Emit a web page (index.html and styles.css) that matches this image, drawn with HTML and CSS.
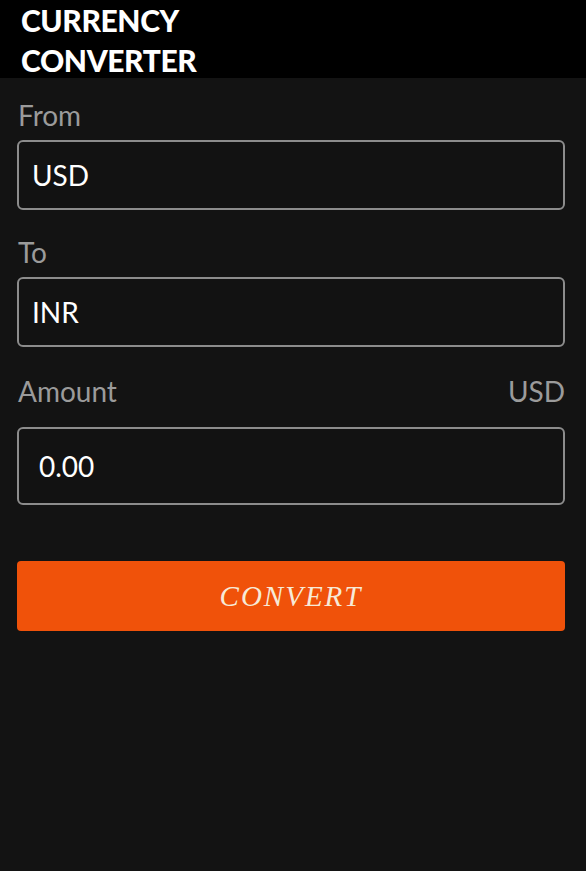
FILE: index.html
```html
<!DOCTYPE html>
<html>
<head>
<meta charset="utf-8">
<link rel="stylesheet" href="styles.css">
</head>
<body>
<header class="topbar">
  <h1 class="title">CURRENCY<br>CONVERTER</h1>
</header>
<main class="form">
  <div class="field">
    <label class="label">From</label>
    <div class="box">USD</div>
  </div>
  <div class="field">
    <label class="label">To</label>
    <div class="box">INR</div>
  </div>
  <div class="field">
    <div class="label-row">
      <label class="label">Amount</label>
      <span class="label">USD</span>
    </div>
    <div class="box box-amount">0.00</div>
  </div>
  <button class="convert">CONVERT</button>
</main>
</body>
</html>
```

FILE: styles.css
```css
html, body {
  margin: 0;
  padding: 0;
  background: #131313;
  height: 100%;
}
body {
  font-family: Lato, "Open Sans", sans-serif;
}
.topbar {
  background: #000;
  height: 78px;
  padding: 0 0 0 21px;
  box-sizing: border-box;
}
.title {
  margin: 0;
  color: #fff;
  font-family: Lato, sans-serif;
  font-weight: 900;
  font-size: 30px;
  line-height: 40px;
  letter-spacing: -0.4px;
}
.form {
  padding: 0 21px 0 17px;
  display: flex;
  flex-direction: column;
}
.field {
  display: flex;
  flex-direction: column;
}
.label {
  color: #9b9b9b;
  font-size: 28px;
  line-height: 30px;
  padding-left: 1px;
}
.field .label { display: block; }
.field:first-child > .label { margin-top: 22px; }
.field:nth-child(2) > .label { margin-top: 27px; }
.label-row {
  display: flex;
  justify-content: space-between;
  margin-top: 29px;
}
.box {
  margin-top: 10px;
  height: 70px;
  box-sizing: border-box;
  border: 2px solid #8c8c8c;
  border-radius: 6px;
  background: #121212;
  color: #fff;
  font-size: 28px;
  display: flex;
  align-items: center;
  padding-left: 13px;
}
.box-amount {
  margin-top: 21px;
  height: 78px;
  padding-left: 20px;
}
.convert {
  margin-top: 56px;
  height: 70px;
  border: none;
  border-radius: 4px;
  background: #f0520a;
  color: #f7ead8;
  font-family: "Liberation Serif", serif;
  font-style: italic;
  font-size: 29px;
  letter-spacing: 2px;
  padding: 0;
}
```
